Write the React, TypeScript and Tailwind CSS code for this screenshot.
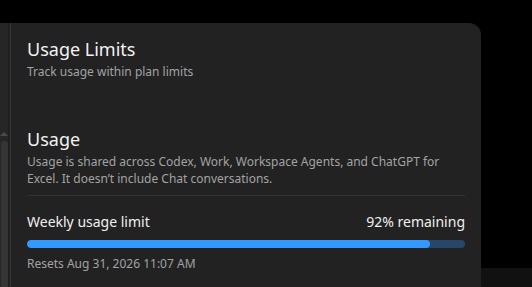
import React from "react";

const UsageBar = ({ percent }: { percent: number }) => {
  return (
    <div className="h-[8px] w-full rounded-full bg-[#27466a] overflow-hidden">
      <div
        className="h-full rounded-full bg-[#3399ff]"
        style={{ width: `${percent}%` }}
      />
    </div>
  );
};

const App = () => {
  return (
    <div
      className="w-[532px] h-[287px] bg-black overflow-hidden flex pt-[23px]"
      style={{ fontFamily: '"Noto Sans", sans-serif' }}
    >
      {/* Settings panel */}
      <div className="w-[481px] h-full bg-[#222222] rounded-tr-[12px] flex">
        {/* Side list edge with its scrollbar */}
        <div className="w-[11px] h-full bg-[#202020] border-r border-[#363636] flex">
          <div className="w-[8px] h-full bg-[#262626] flex flex-col items-center pt-[109px]">
            <div className="w-0 h-0 border-l-[4px] border-r-[4px] border-b-[4px] border-l-transparent border-r-transparent border-b-[#4a4a4a]" />
            <div className="mt-[5px] w-[7px] flex-1 rounded-t-[3px] bg-[#353535]" />
          </div>
        </div>

        {/* Content */}
        <div className="flex-1 pl-[16px] pr-[16px] pt-[14px]">
          <h1 className="text-[18px] leading-[24px] text-[#f2f2f2]">Usage Limits</h1>
          <p className="mt-[3px] text-[12px] leading-[16px] text-[#a3a3a3]">
            Track usage within plan limits
          </p>

          <h2 className="mt-[47px] text-[18px] leading-[24px] text-[#f2f2f2]">Usage</h2>
          <p className="mt-[2px] text-[12px] leading-[17px] text-[#a3a3a3]">
            Usage is shared across Codex, Work, Workspace Agents, and ChatGPT for
            Excel. It doesn’t include Chat conversations.
          </p>

          <div className="mt-[8px] border-t border-[#303030]" />

          <div className="mt-[16px] flex justify-between text-[14px] leading-[20px] text-[#f0f0f0]">
            <span>Weekly usage limit</span>
            <span>92% remaining</span>
          </div>
          <div className="mt-[8px]">
            <UsageBar percent={92} />
          </div>
          <p className="mt-[8px] text-[12px] leading-[16px] text-[#a3a3a3]">
            Resets Aug 31, 2026 11:07 AM
          </p>
        </div>
      </div>

      {/* Backdrop strip to the right */}
      <div className="flex-1 flex flex-col justify-end">
        <div className="h-[19px] bg-[#111111]" />
      </div>
    </div>
  );
};

export default App;
